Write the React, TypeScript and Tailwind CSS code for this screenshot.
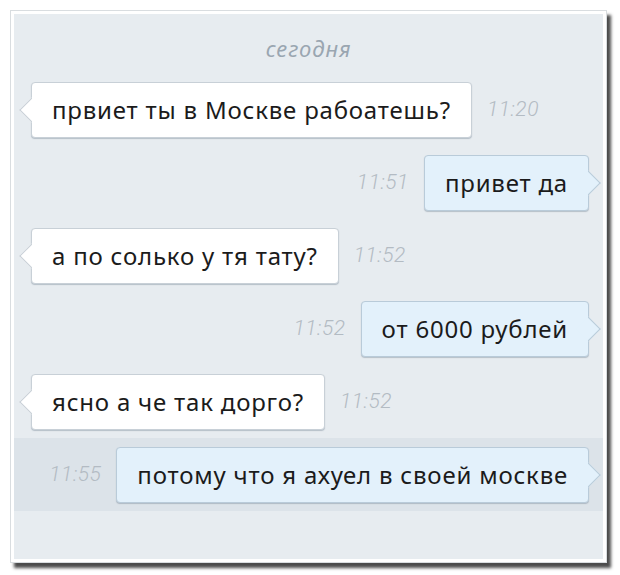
import React from "react";

type Msg = { text: string; time: string; out: boolean; active?: boolean };

const messages: Msg[] = [
  { text: "првиет ты в Москве рабоатешь?", time: "11:20", out: false },
  { text: "привет да", time: "11:51", out: true },
  { text: "а по солько у тя тату?", time: "11:52", out: false },
  { text: "от 6000 рублей", time: "11:52", out: true },
  { text: "ясно а че так дорго?", time: "11:52", out: false },
  { text: "потому что я ахуел в своей москве", time: "11:55", out: true, active: true },
];

function Time({ value }: { value: string }) {
  return (
    <span className="font-['Roboto',sans-serif] text-[21px] font-light italic text-[#b3bbc3] leading-none tracking-[0.5px]">
      {value}
    </span>
  );
}

function Bubble({ msg }: { msg: Msg }) {
  const box = msg.out
    ? "bg-[#e3f1fb] border-[#b9cbd9]"
    : "bg-white border-[#c8d0d7]";
  return (
    <div
      className={`relative flex h-[56px] items-center rounded-[4px] border px-5 shadow-[0_1px_1px_rgba(120,135,150,0.45)] ${box}`}
    >
      <span
        className={`absolute top-1/2 h-[18px] w-[18px] -translate-y-1/2 rotate-45 border ${box} ${
          msg.out
            ? "right-[-9px] border-b-transparent border-l-transparent"
            : "left-[-9px] border-t-transparent border-r-transparent"
        }`}
      />
      <span className="relative font-['Noto_Sans',sans-serif] text-[24px] text-[#1b1b1b] leading-none tracking-[0.8px]">
        {msg.text}
      </span>
    </div>
  );
}

export default function App() {
  return (
    <div className="h-[575px] w-[620px] bg-white pl-[10px] pt-[10px]">
      <div className="h-[553px] w-[597px] border border-[#d9dde0] bg-white p-[3px] shadow-[4px_5px_3px_rgba(0,0,0,0.7)]">
        <div className="flex h-full flex-col bg-[#e7ecf0]">
          <div className="flex h-[59px] items-center justify-center pt-[10px]">
            <span className="font-['Noto_Sans',sans-serif] text-[22px] italic text-[#9aa6b1] tracking-[1px]">
              сегодня
            </span>
          </div>
          {messages.map((m, i) => (
            <div
              key={i}
              className={`flex h-[73px] items-center gap-[15px] ${
                m.out ? "justify-end pr-[14px]" : "pl-[17px]"
              } ${m.active ? "bg-[#dce3e9]" : ""}`}
            >
              {m.out && <Time value={m.time} />}
              <Bubble msg={m} />
              {!m.out && <Time value={m.time} />}
            </div>
          ))}
        </div>
      </div>
    </div>
  );
}
